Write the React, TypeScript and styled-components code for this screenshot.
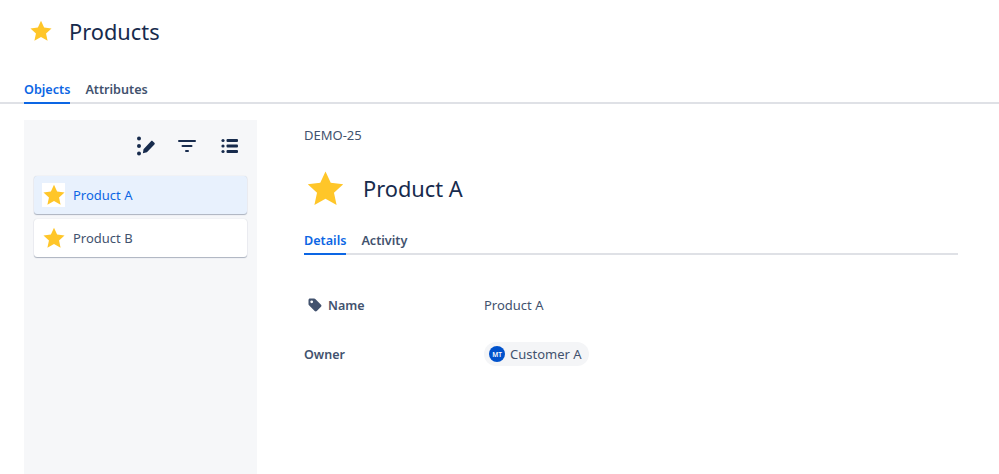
import styled, { createGlobalStyle } from "styled-components";

const GlobalStyle = createGlobalStyle`
  html, body {
    margin: 0;
    padding: 0;
    background: #fff;
    font-family: "Noto Sans", "Open Sans", sans-serif;
    color: #42526e;
  }
  * {
    box-sizing: border-box;
  }
`;

const Page = styled.div`
  width: 999px;
  height: 474px;
  overflow: hidden;
  display: flex;
  flex-direction: column;
`;

const Header = styled.div`
  height: 62px;
  padding-left: 30px;
  display: flex;
  align-items: center;
  gap: 17px;
`;

const PageTitle = styled.h1`
  margin: 0;
  font-size: 21.8px;
  font-weight: 400;
  color: #172b4d;
`;

const TabBar = styled.div`
  display: flex;
  gap: 15px;
  height: 26px;
  box-shadow: inset 0 -2px 0 #dfe1e6;
`;

const Tab = styled.div<{ $active?: boolean }>`
  height: 26px;
  line-height: 23px;
  font-size: 12.6px;
  font-weight: 600;
  color: ${(p) => (p.$active ? "#0c66e4" : "#42526e")};
  border-bottom: 2px solid ${(p) => (p.$active ? "#0c66e4" : "transparent")};
`;

const TopTabs = styled.div`
  margin-top: 16px;
  padding-left: 24px;
  position: relative;
  &::after {
    content: "";
    position: absolute;
    left: 0;
    width: 24px;
    bottom: 0;
    height: 2px;
    background: #dfe1e6;
  }
`;

const Body = styled.div`
  flex: 1;
  display: flex;
  padding: 16px 0 0 24px;
  min-height: 0;
`;

const Sidebar = styled.aside`
  width: 233px;
  background: #f6f7f9;
  padding: 10px;
  display: flex;
  flex-direction: column;
`;

const Toolbar = styled.div`
  height: 46px;
  display: flex;
  justify-content: flex-end;
  align-items: center;
  gap: 22px;
  padding: 0 7px 14px 0;
`;

const ObjectList = styled.div`
  display: flex;
  flex-direction: column;
  gap: 5px;
`;

const Card = styled.div<{ $selected?: boolean }>`
  height: 38px;
  border-radius: 3px;
  background: ${(p) => (p.$selected ? "#e8f1fd" : "#fff")};
  box-shadow: 0 1px 1px rgba(9, 30, 66, 0.3), 0 0 1px rgba(9, 30, 66, 0.2);
  display: flex;
  align-items: center;
  padding-left: 8px;
  gap: 8px;
  font-size: 13px;
  color: ${(p) => (p.$selected ? "#0c66e4" : "#42526e")};
`;

const IconBox = styled.span`
  width: 23px;
  height: 24px;
  background: #fff;
  display: flex;
  align-items: center;
  justify-content: center;
`;

const Detail = styled.main`
  margin-left: 47px;
  width: 654px;
  display: flex;
  flex-direction: column;
`;

const ObjectKey = styled.div`
  font-size: 13px;
  line-height: 18px;
  margin-top: 6px;
  color: #42526e;
`;

const ObjectHead = styled.div`
  margin-top: 24px;
  height: 40px;
  padding-left: 3px;
  display: flex;
  align-items: center;
  gap: 19px;
`;

const ObjectTitle = styled.h2`
  margin: 0;
  font-size: 21.8px;
  font-weight: 400;
  color: #172b4d;
`;

const DetailTabs = styled.div`
  margin-top: 21px;
`;

const Rows = styled.div`
  margin-top: 38px;
  display: flex;
  flex-direction: column;
  gap: 25px;
`;

const Row = styled.div`
  height: 24px;
  display: flex;
  align-items: center;
`;

const Label = styled.div<{ $indent?: number }>`
  width: 180px;
  padding-left: ${(p) => p.$indent || 0}px;
  display: flex;
  align-items: center;
  gap: 5px;
  font-size: 12.5px;
  font-weight: 600;
  color: #42526e;
`;

const Value = styled.div`
  font-size: 13px;
  color: #42526e;
`;

const Chip = styled.div`
  height: 24px;
  width: 105px;
  border-radius: 12px;
  background: #f4f5f7;
  display: flex;
  align-items: center;
  gap: 5px;
  padding-left: 5px;
  font-size: 13px;
  color: #42526e;
`;

const Avatar = styled.span`
  width: 16px;
  height: 16px;
  border-radius: 50%;
  background: #0052cc;
  color: #fff;
  font-size: 6.5px;
  font-weight: 600;
  display: flex;
  align-items: center;
  justify-content: center;
`;

const Star = ({ size }: { size: number }) => (
  <svg width={size} height={size} viewBox="0 0 24 24">
    <path
      d="M12 .9l3.400 7.400 8.100.9-6 5.500 1.700 8-7.200-4.100-7.200 4.100 1.700-8-6-5.500 8.100-.9z"
      fill="#ffc629"
    />
  </svg>
);

const EditListIcon = () => (
  <svg width="21" height="22" viewBox="0 0 21 22" fill="#172b4d">
    <circle cx="4" cy="3.500" r="2" />
    <circle cx="4" cy="11" r="2" />
    <circle cx="4" cy="18.500" r="2" />
    <path d="M8.500 14.200l7.500-8c.5-.5 1.200-.5 1.700 0l1.700 1.500c.5.5.5 1.200 0 1.700l-7.500 7.800-4 1z" />
  </svg>
);

const FilterIcon = () => (
  <svg width="20" height="20" viewBox="0 0 20 20" fill="#172b4d">
    <rect x="0" y="4" width="18" height="2" rx="1" />
    <rect x="3.500" y="9" width="11" height="2" rx="1" />
    <rect x="7" y="14" width="4" height="2" rx="1" />
  </svg>
);

const ListIcon = () => (
  <svg width="20" height="20" viewBox="0 0 20 20" fill="#172b4d">
    <circle cx="3" cy="4.500" r="1.600" />
    <circle cx="3" cy="10" r="1.600" />
    <circle cx="3" cy="15.500" r="1.600" />
    <rect x="6.500" y="3" width="11.500" height="3" rx="1" />
    <rect x="6.500" y="8.500" width="11.500" height="3" rx="1" />
    <rect x="6.500" y="14" width="11.500" height="3" rx="1" />
  </svg>
);

const TagIcon = () => (
  <svg width="16" height="16" viewBox="0 0 16 16" fill="#42526e">
    <path
      d="M1.500 3c0-.9.7-1.500 1.500-1.500h4.200c.4 0 .8.2 1.100.5l5.700 5.700c.6.6.6 1.500 0 2.100l-4.200 4.200c-.6.6-1.500.6-2.100 0L2 8.300c-.3-.3-.5-.7-.5-1.100zm3.200 3.200a1.400 1.400 0 1 0 0-2.800 1.400 1.400 0 0 0 0 2.800z"
      fillRule="evenodd"
    />
  </svg>
);

const App = () => {
  return (
    <Page>
      <GlobalStyle />
      <Header>
        <Star size={22} />
        <PageTitle>Products</PageTitle>
      </Header>
      <TopTabs>
        <TabBar>
          <Tab $active>Objects</Tab>
          <Tab>Attributes</Tab>
        </TabBar>
      </TopTabs>
      <Body>
        <Sidebar>
          <Toolbar>
            <EditListIcon />
            <FilterIcon />
            <ListIcon />
          </Toolbar>
          <ObjectList>
            <Card $selected>
              <IconBox>
                <Star size={22} />
              </IconBox>
              Product A
            </Card>
            <Card>
              <IconBox>
                <Star size={22} />
              </IconBox>
              Product B
            </Card>
          </ObjectList>
        </Sidebar>
        <Detail>
          <ObjectKey>DEMO-25</ObjectKey>
          <ObjectHead>
            <Star size={37} />
            <ObjectTitle>Product A</ObjectTitle>
          </ObjectHead>
          <DetailTabs>
            <TabBar>
              <Tab $active>Details</Tab>
              <Tab>Activity</Tab>
            </TabBar>
          </DetailTabs>
          <Rows>
            <Row>
              <Label $indent={3}>
                <TagIcon />
                Name
              </Label>
              <Value>Product A</Value>
            </Row>
            <Row>
              <Label>Owner</Label>
              <Chip>
                <Avatar>MT</Avatar>
                Customer A
              </Chip>
            </Row>
          </Rows>
        </Detail>
      </Body>
    </Page>
  );
};

export default App;
